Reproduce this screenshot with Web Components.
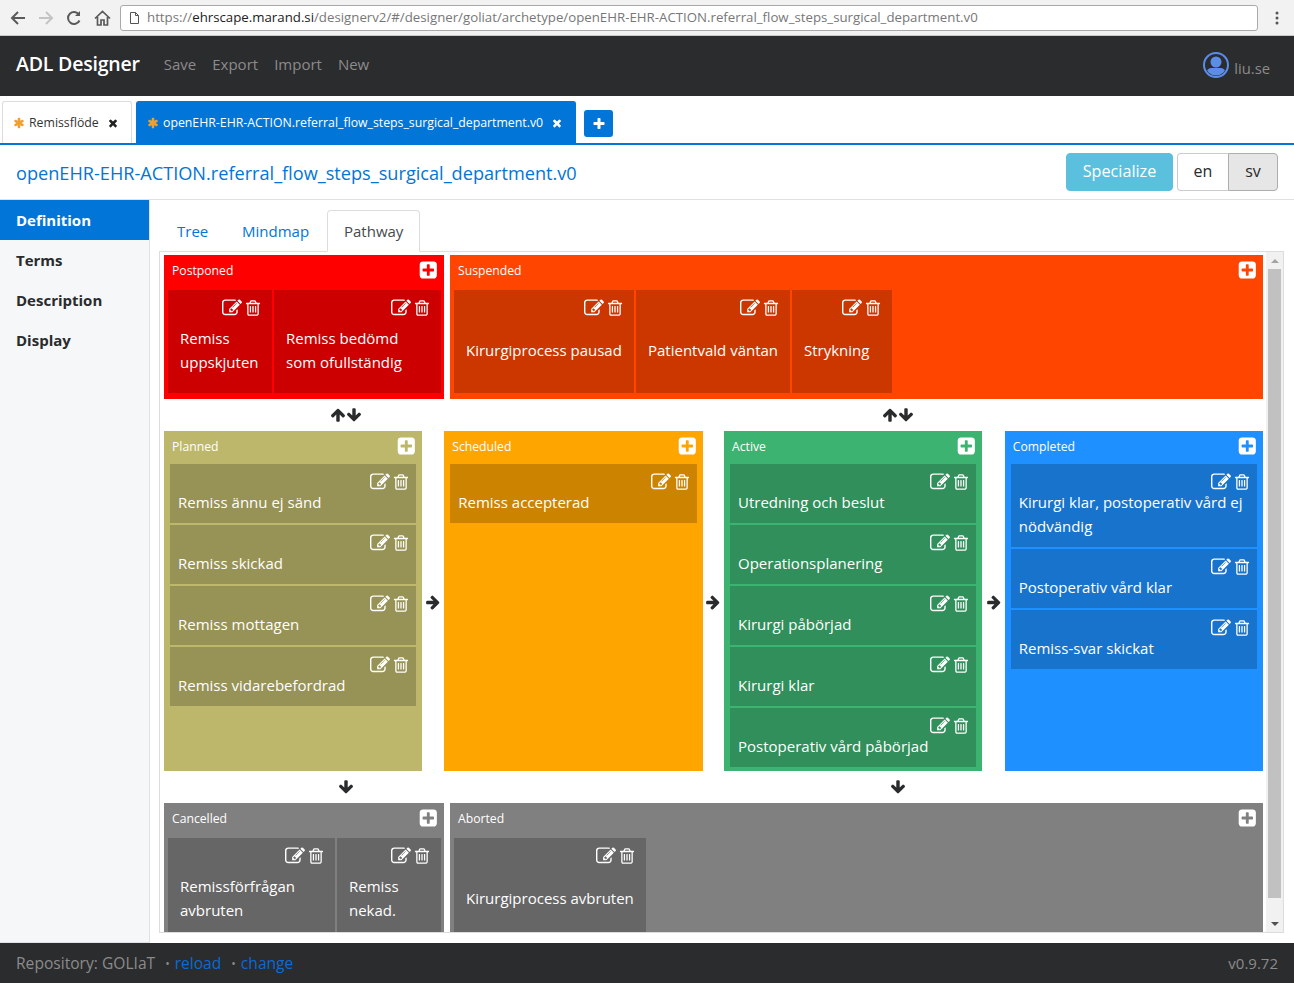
<!DOCTYPE html>
<html lang="en">
<head>
<meta charset="utf-8">
<title>ADL Designer</title>
<style>
  html, body { margin: 0; height: 100%; overflow: hidden; }
  body { font-family: "Open Sans", "Noto Sans", sans-serif; display: flex; flex-direction: column; height: 983px; background: #fff; }
  main-area { flex: 1; min-height: 0; }
</style>
</head>
<body>
<browser-bar url-host="ehrscape.marand.si" url-path="/designerv2/#/designer/goliat/archetype/openEHR-EHR-ACTION.referral_flow_steps_surgical_department.v0"></browser-bar>
<app-navbar></app-navbar>
<doc-tabs></doc-tabs>
<archetype-header>openEHR-EHR-ACTION.referral_flow_steps_surgical_department.v0</archetype-header>
<main-area>
  <side-menu></side-menu>
  <view-panel></view-panel>
</main-area>
<app-footer></app-footer>

<script>
const ICONS = {
  trash: 'M704 736v576q0 14-9 23t-23 9h-64q-14 0-23-9t-9-23v-576q0-14 9-23t23-9h64q14 0 23 9t9 23zm256 0v576q0 14-9 23t-23 9h-64q-14 0-23-9t-9-23v-576q0-14 9-23t23-9h64q14 0 23 9t9 23zm256 0v576q0 14-9 23t-23 9h-64q-14 0-23-9t-9-23v-576q0-14 9-23t23-9h64q14 0 23 9t9 23zm128 724v-948h-896v948q0 22 7 40.5t14.5 27 10.5 8.5h832q3 0 10.5-8.5t14.5-27 7-40.5zm-672-1076h448l-48-117q-7-9-17-11h-317q-10 2-17 11zm928 32v64q0 14-9 23t-23 9h-96v948q0 83-47 143.5t-113 60.5h-832q-66 0-113-58.5t-47-141.5v-952h-96q-14 0-23-9t-9-23v-64q0-14 9-23t23-9h309l70-167q15-37 54-63t79-26h320q40 0 79 26t54 63l70 167h309q14 0 23 9t9 23z',
  edit: 'M888 1184l116-116-152-152-116 116v56h96v96h56zm440-720q-16-16-33 1l-350 350q-17 17-1 33t33-1l350-350q17-17 1-33zm80 594v190q0 119-84.5 203.5t-203.5 84.5h-832q-119 0-203.5-84.5t-84.5-203.5v-832q0-119 84.5-203.5t203.5-84.5h832q63 0 117 25 15 7 18 23 3 17-9 29l-49 49q-14 14-32 8-23-6-45-6h-832q-66 0-113 47t-47 113v832q0 66 47 113t113 47h832q66 0 113-47t47-113v-126q0-13 9-22l64-64q15-15 35-7t20 29zm-96-738l288 288-672 672h-288v-288zm444 132l-92 92-288-288 92-92q28-28 68-28t68 28l152 152q28 28 28 68t-28 68z',
  plusSquare: 'M1344 960v-128q0-26-19-45t-45-19h-320v-320q0-26-19-45t-45-19h-128q-26 0-45 19t-19 45v320h-320q-26 0-45 19t-19 45v128q0 26 19 45t45 19h320v320q0 26 19 45t45 19h128q26 0 45-19t19-45v-320h320q26 0 45-19t19-45zm256-544v960q0 119-84.5 203.5t-203.5 84.5h-960q-119 0-203.5-84.5t-84.5-203.5v-960q0-119 84.5-203.5t203.5-84.5h960q119 0 203.5 84.5t84.5 203.5z',
  up: 'M1675 971q0 51-37 90l-75 75q-38 38-91 38-54 0-90-38l-294-293v704q0 52-37.5 84.5t-90.5 32.5h-128q-53 0-90.5-32.5t-37.5-84.5v-704l-294 293q-36 38-90 38t-90-38l-75-75q-38-38-38-90 0-53 38-91l651-651q35-37 90-37 54 0 91 37l651 651q37 39 37 91z',
  down: 'M1675 832q0 53-37 90l-651 652q-39 37-91 37-53 0-90-37l-651-652q-38-36-38-90 0-53 38-91l74-75q39-37 91-37 53 0 90 37l294 294v-704q0-52 38-90t90-38h128q52 0 90 38t38 90v704l294-294q37-37 90-37 52 0 91 37l75 75q37 39 37 91z',
  right: 'M1600 960q0 54-37 91l-651 651q-39 37-91 37-51 0-90-37l-75-75q-38-38-38-91t38-91l293-293h-704q-52 0-84.5-37.5t-32.5-90.5v-128q0-53 32.5-90.5t84.5-37.5h704l-293-294q-38-36-38-90t38-90l75-75q38-38 90-38 53 0 91 38l651 651q37 35 37 90z',
  times: 'M1490 1322q0 40-28 68l-136 136q-28 28-68 28t-68-28l-294-294-294 294q-28 28-68 28t-68-28l-136-136q-28-28-28-68t28-68l294-294-294-294q-28-28-28-68t28-68l136-136q28-28 68-28t68 28l294 294 294-294q28-28 68-28t68 28l136 136q28 28 28 68t-28 68l-294 294 294 294q28 28 28 68z',
  asterisk: 'M1546 1050q46 26 59.5 77.5t-12.5 97.5l-64 110q-26 46-77.5 59.5t-97.5-12.5l-266-153v307q0 52-38 90t-90 38h-128q-52 0-90-38t-38-90v-307l-266 153q-46 26-97.5 12.5t-77.5-59.5l-64-110q-26-46-12.5-97.5t59.5-77.5l266-154-266-154q-46-26-59.5-77.5t12.5-97.5l64-110q26-46 77.5-59.5t97.5 12.5l266 153v-307q0-52 38-90t90-38h128q52 0 90 38t38 90v307l266-153q46-26 97.5-12.5t77.5 59.5l64 110q26 46 12.5 97.5t-59.5 77.5l-266 154z',
  plus: 'M1600 736v192q0 40-28 68t-68 28h-416v416q0 40-28 68t-68 28h-192q-40 0-68-28t-28-68v-416h-416q-40 0-68-28t-28-68v-192q0-40 28-68t68-28h416v-416q0-40 28-68t68-28h192q40 0 68 28t28 68v416h416q40 0 68 28t28 68z'
};

class FaIcon extends HTMLElement {
  connectedCallback() {
    if (this.shadowRoot) return;
    const size = this.getAttribute('size') || 16;
    this.attachShadow({ mode: 'open' });
    this.shadowRoot.innerHTML = `
      <style>
        :host { display: inline-block; width: ${size}px; height: ${size}px; line-height: 0; flex: none; }
        svg { width: 100%; height: 100%; fill: currentColor; overflow: visible; }
      </style>
      <svg viewBox="0 0 1792 1792"><path d="${ICONS[this.getAttribute('name')]}"/></svg>
    `;
  }
}

class BrowserBar extends HTMLElement {
  connectedCallback() {
    this.attachShadow({ mode: 'open' });
    this.shadowRoot.innerHTML = `
      <style>
        :host { display: flex; align-items: center; height: 35px; background: #f2f2f2; border-bottom: 1px solid #c9c9c9; padding: 0 0 0 10px; font-family: "Open Sans", sans-serif; }
        svg { display: block; flex: none; fill: none; stroke: #5a5a5a; stroke-width: 2; }
        .nav { display: flex; align-items: center; gap: 12px; width: 110px; }
        .url { width: 1138px; height: 26px; box-sizing: border-box; background: #fff; border: 1px solid #a9a9a9; border-radius: 3px; display: flex; align-items: center; padding: 0 0 2px 9px; gap: 8px; font-size: 13.25px; color: #777; white-space: nowrap; overflow: hidden; }
        .url b { font-weight: 400; color: #222; }
        .url svg { stroke: #555; stroke-width: 1; margin-top: 2px; }
        .more { margin-left: 17px; }
        .more svg { fill: #555; stroke: none; }
      </style>
      <div class="nav">
        <svg width="16" height="16" viewBox="0 0 16 16"><path d="M15 8H2M8 2 2 8l6 6"/></svg>
        <svg width="16" height="16" viewBox="0 0 16 16" style="stroke:#c4c4c4"><path d="M1 8h13M8 2l6 6-6 6"/></svg>
        <svg width="16" height="16" viewBox="0 0 16 16"><path d="M13.5 10.5A6 6 0 1 1 13 4.6"/><path d="M14 1v5H9" style="fill:#5a5a5a;stroke:none"/></svg>
        <svg width="17" height="16" viewBox="0 0 17 16"><path d="M1 8.5 8.500 1.500 16 8.500M3.500 7v8h3.500v-5h3v5h3.500V7" stroke-width="1.700"/></svg>
      </div>
      <div class="url">
        <svg width="9" height="12" viewBox="0 0 9 12"><path d="M.5.500h5l3 3v8h-8zM5.500.5v3h3"/></svg>
        <span>https://<b>${this.getAttribute('url-host')}</b>${this.getAttribute('url-path')}</span>
      </div>
      <div class="more"><svg width="4" height="14" viewBox="0 0 4 14"><circle cx="2" cy="2" r="1.500"/><circle cx="2" cy="7" r="1.500"/><circle cx="2" cy="12" r="1.500"/></svg></div>
    `;
  }
}

class AppNavbar extends HTMLElement {
  connectedCallback() {
    this.attachShadow({ mode: 'open' });
    this.shadowRoot.innerHTML = `
      <style>
        :host { display: flex; align-items: center; box-sizing: border-box; height: 60px; background: #2b2c2e; padding: 0 24px 2px 16px; color: #8b8b8b; font-size: 15px; }
        .brand { color: #fff; font-size: 19.5px; font-weight: 600; margin: 0 24px 4px 0; letter-spacing: -.2px; }
        a { margin: 0 16px 2px 0; }
        .user { margin-left: auto; display: flex; align-items: center; gap: 5px; }
        .user span { margin-top: 6px; font-size: 14.800px; }
        svg { display: block; }
      </style>
      <span class="brand">ADL Designer</span>
      <a>Save</a><a>Export</a><a>Import</a><a>New</a>
      <div class="user">
        <svg width="26" height="26" viewBox="0 0 26 26">
          <defs><clipPath id="c"><circle cx="13" cy="13" r="10.500"/></clipPath></defs>
          <circle cx="13" cy="13" r="12" fill="none" stroke="#5b8de8" stroke-width="2"/>
          <g fill="#5b8de8" clip-path="url(#c)"><circle cx="13" cy="10" r="5.500"/><path d="M2 26c0-8 4-10 7-10h8c3 0 7 2 7 10z"/></g>
        </svg>
        <span>liu.se</span>
      </div>
    `;
  }
}

class DocTabs extends HTMLElement {
  connectedCallback() {
    this.attachShadow({ mode: 'open' });
    this.shadowRoot.innerHTML = `
      <style>
        :host { display: flex; align-items: flex-end; height: 47px; border-bottom: 2px solid #0275d8; padding-left: 2px; font-size: 12.3px; color: #333; }
        .tab { display: flex; align-items: center; box-sizing: border-box; height: 42px; border: 1px solid #ddd; border-bottom: 0; border-radius: 3px 3px 0 0; padding-left: 10px; margin-right: 4px; white-space: nowrap; }
        .one { width: 130px; }
        .two { width: 440px; background: #0275d8; border-color: #0275d8; color: #fff; }
        fa-icon.star { color: #f0a030; margin-right: 4px; }
        fa-icon.x { margin-left: 8px; color: #222; }
        .two fa-icon.x { color: #fff; }
        .add { width: 29px; height: 27px; margin: 0 0 6px 4px; background: #0275d8; border-radius: 3px; color: #fff; display: flex; align-items: center; justify-content: center; }
      </style>
      <div class="tab one"><fa-icon class="star" name="asterisk" size="12"></fa-icon>Remissflöde<fa-icon class="x" name="times" size="12"></fa-icon></div>
      <div class="tab two"><fa-icon class="star" name="asterisk" size="12"></fa-icon><span>openEHR-EHR-ACTION.referral_flow_steps_surgical_department.v0</span><fa-icon class="x" name="times" size="12"></fa-icon></div>
      <div class="add"><fa-icon name="plus" size="14"></fa-icon></div>
    `;
  }
}

class ArchetypeHeader extends HTMLElement {
  connectedCallback() {
    this.attachShadow({ mode: 'open' });
    this.shadowRoot.innerHTML = `
      <style>
        :host { display: flex; align-items: center; justify-content: space-between; height: 54px; border-bottom: 1px solid #dfe1e6; padding: 0 16px; }
        h1 { margin: 2px 0 0; font-size: 18.150px; font-weight: 400; color: #0275d8; }
        .btns { display: flex; align-items: center; font-size: 16px; color: #292b2c; }
        button { font: inherit; color: inherit; box-sizing: border-box; height: 38px; border: 1px solid #ccc; background: #fff; padding: 0 0 3px; }
        .spec { width: 107px; background: #5bc0de; border-color: #5bc0de; color: #fff; border-radius: 4px; margin-right: 4px; font-size: 16.200px; }
        .en { width: 51px; border-radius: 4px 0 0 4px; border-right: 0; }
        .sv { width: 50px; border-radius: 0 4px 4px 0; background: #e6e6e6; border-color: #adadad; }
      </style>
      <h1><slot></slot></h1>
      <div class="btns"><button class="spec">Specialize</button><button class="en">en</button><button class="sv">sv</button></div>
    `;
  }
}

class MainArea extends HTMLElement {
  connectedCallback() {
    this.attachShadow({ mode: 'open' });
    this.shadowRoot.innerHTML = `
      <style>:host { display: flex; }</style>
      <slot></slot>
    `;
  }
}

class SideMenu extends HTMLElement {
  connectedCallback() {
    this.attachShadow({ mode: 'open' });
    const items = ['Definition', 'Terms', 'Description', 'Display'];
    this.shadowRoot.innerHTML = `
      <style>
        :host { display: block; flex: none; box-sizing: border-box; width: 150px; background: #f6f7f9; border-right: 1px solid #dfe1e6; border-bottom: 1px solid #dfe1e6; }
        a { display: flex; align-items: center; height: 40px; padding-left: 16px; font-size: 15px; font-weight: 700; color: #292b2c; }
        a.on { background: #0275d8; color: #fff; }
      </style>
      ${items.map((t, i) => `<a class="${i ? '' : 'on'}">${t}</a>`).join('')}
    `;
  }
}

class ViewPanel extends HTMLElement {
  connectedCallback() {
    this.attachShadow({ mode: 'open' });
    this.shadowRoot.innerHTML = `
      <style>
        :host { display: flex; flex-direction: column; flex: 1; min-width: 0; box-sizing: border-box; padding: 10px 10px 10px 9px; }
        .tabs { display: flex; height: 42px; flex: none; font-size: 15px; color: #0275d8; position: relative; z-index: 1; }
        .tabs a { display: flex; align-items: center; box-sizing: border-box; height: 42px; border: 1px solid transparent; padding-left: 17px; }
        .tabs a:nth-child(1) { width: 65px; }
        .tabs a:nth-child(2) { width: 101px; }
        .tabs a.on { width: 93px; margin-left: 2px; padding-left: 16px; border-color: #ddd; border-bottom-color: #fff; border-radius: 4px 4px 0 0; background: #fff; color: #464a4c; }
        path-board { flex: 1; min-height: 0; margin-top: -1px; }
      </style>
      <div class="tabs"><a>Tree</a><a>Mindmap</a><a class="on">Pathway</a></div>
      <path-board></path-board>
    `;
  }
}

class StateCell extends HTMLElement {
  connectedCallback() {
    this.attachShadow({ mode: 'open' });
    this.shadowRoot.innerHTML = `
      <style>
        :host { display: block; box-sizing: border-box; background: rgba(0,0,0,.2); color: #fff; font-size: 15px; line-height: 24px; padding: 8px 8px 9px; }
        :host([wide]) { padding: 8px 12px 19px; flex: none; }
        .tools { display: flex; justify-content: flex-end; align-items: center; gap: 2px; height: 19px; margin-right: -2px; }
        .text { display: block; margin-top: -1px; }
        :host([wide]) .text { display: flex; align-items: center; min-height: 48px; margin-top: 9px; }
      </style>
      <div class="tools"><fa-icon name="edit" size="20"></fa-icon><fa-icon name="trash" size="18"></fa-icon></div>
      <div class="text"><span><slot></slot></span></div>
    `;
  }
}

class StateGroup extends HTMLElement {
  connectedCallback() {
    this.attachShadow({ mode: 'open' });
    this.shadowRoot.innerHTML = `
      <style>
        :host { display: flex; flex-direction: column; box-sizing: border-box; background: var(--bg); color: #fff; padding-bottom: 4px; }
        :host([wide]) { padding-bottom: 6px; }
        header { display: flex; align-items: center; justify-content: space-between; height: 30px; margin-bottom: 3px; padding: 0 5px 0 8px; font-size: 12.200px; flex: none; }
        :host([wide]) header { margin-bottom: 5px; }
        .cells { display: flex; flex-direction: column; gap: 2px; padding: 0 6px; }
        :host([wide]) .cells { flex-direction: row; padding: 0 3px 0 4px; }
      </style>
      <header><span>${this.getAttribute('label')}</span><fa-icon name="plusSquare" size="20"></fa-icon></header>
      <div class="cells"><slot></slot></div>
    `;
  }
}

class PathBoard extends HTMLElement {
  connectedCallback() {
    this.attachShadow({ mode: 'open' });
    this.shadowRoot.innerHTML = `
      <style>
        :host { display: flex; box-sizing: border-box; border: 1px solid #ddd; font-family: "Open Sans", sans-serif; }
        .scroll { flex: 1; min-width: 0; overflow: hidden; padding: 3px 3px 0 4px; }
        .row { display: flex; }
        .split { gap: 6px; }
        .split state-group:first-child { width: 280px; flex: none; }
        .split state-group:last-child { flex: 1; }
        .arrows { height: 32px; display: flex; align-items: center; color: #292b2c; }
        .arrows div { display: flex; justify-content: center; gap: 0; flex: none; }
        .arrows .a { width: 364px; }
        .arrows .b { width: 740px; }
        .cols state-group { flex: 1 1 0; min-width: 0; }
        .link { flex: none; width: 22px; padding-top: 2px; display: flex; align-items: center; justify-content: center; color: #292b2c; }
        .link.n { width: 21.500px; }
        .link.w { width: 22.500px; }
      </style>
      <div class="scroll">
        <div class="row split">
          <state-group wide label="Postponed" style="--bg:#ff0000">
            <state-cell wide style="width:104px">Remiss uppskjuten</state-cell>
            <state-cell wide style="width:167px">Remiss bedömd som ofullständig</state-cell>
          </state-group>
          <state-group wide label="Suspended" style="--bg:#ff4500">
            <state-cell wide style="width:180px">Kirurgiprocess pausad</state-cell>
            <state-cell wide style="width:154px;white-space:nowrap">Patientvald väntan</state-cell>
            <state-cell wide style="width:100px">Strykning</state-cell>
          </state-group>
        </div>
        <div class="arrows">
          <div class="a"><fa-icon name="up" size="16"></fa-icon><fa-icon name="down" size="16"></fa-icon></div>
          <div class="b"><fa-icon name="up" size="16"></fa-icon><fa-icon name="down" size="16"></fa-icon></div>
        </div>
        <div class="row cols">
          <state-group label="Planned" style="--bg:#bdb76b">
            <state-cell>Remiss ännu ej sänd</state-cell>
            <state-cell>Remiss skickad</state-cell>
            <state-cell>Remiss mottagen</state-cell>
            <state-cell>Remiss vidarebefordrad</state-cell>
          </state-group>
          <div class="link"><fa-icon name="right" size="16"></fa-icon></div>
          <state-group label="Scheduled" style="--bg:#ffa500">
            <state-cell>Remiss accepterad</state-cell>
          </state-group>
          <div class="link n"><fa-icon name="right" size="16"></fa-icon></div>
          <state-group label="Active" style="--bg:#3cb371">
            <state-cell>Utredning och beslut</state-cell>
            <state-cell>Operationsplanering</state-cell>
            <state-cell>Kirurgi påbörjad</state-cell>
            <state-cell>Kirurgi klar</state-cell>
            <state-cell>Postoperativ vård påbörjad</state-cell>
          </state-group>
          <div class="link w"><fa-icon name="right" size="16"></fa-icon></div>
          <state-group label="Completed" style="--bg:#1e90ff">
            <state-cell>Kirurgi klar, postoperativ vård ej nödvändig</state-cell>
            <state-cell>Postoperativ vård klar</state-cell>
            <state-cell>Remiss-svar skickat</state-cell>
          </state-group>
        </div>
        <div class="arrows">
          <div class="a"><fa-icon name="down" size="16"></fa-icon></div>
          <div class="b"><fa-icon name="down" size="16"></fa-icon></div>
        </div>
        <div class="row split">
          <state-group wide label="Cancelled" style="--bg:#808080">
            <state-cell wide style="width:167px">Remissförfrågan avbruten</state-cell>
            <state-cell wide style="width:104px">Remiss nekad.</state-cell>
          </state-group>
          <state-group wide label="Aborted" style="--bg:#808080">
            <state-cell wide style="width:192px">Kirurgiprocess avbruten</state-cell>
          </state-group>
        </div>
      </div>
      <fake-scrollbar></fake-scrollbar>
    `;
  }
}

class FakeScrollbar extends HTMLElement {
  connectedCallback() {
    this.attachShadow({ mode: 'open' });
    this.shadowRoot.innerHTML = `
      <style>
        :host { display: flex; flex-direction: column; align-items: center; flex: none; width: 17px; background: #f1f1f1; }
        .end { height: 17px; flex: none; display: flex; align-items: center; justify-content: center; }
        .up { border: 4px solid transparent; border-top: 0; border-bottom: 4px solid #a3a3a3; }
        .dn { border: 4px solid transparent; border-bottom: 0; border-top: 4px solid #505050; }
        .track { flex: 1; width: 100%; display: flex; justify-content: center; padding-bottom: 17px; }
        .thumb { width: 13px; background: #c1c1c1; }
      </style>
      <div class="end"><i class="up"></i></div>
      <div class="track"><div class="thumb"></div></div>
      <div class="end"><i class="dn"></i></div>
    `;
  }
}

class AppFooter extends HTMLElement {
  connectedCallback() {
    this.attachShadow({ mode: 'open' });
    this.shadowRoot.innerHTML = `
      <style>
        :host { display: flex; align-items: center; flex: none; height: 40px; background: #2b2c2e; padding: 0 16px; color: #8b8b8b; font-size: 15.600px; }
        a { color: #0a6ad6; }
        .dot { margin: 0 5px 0 10px; font-size: 12px; }
        .ver { margin-left: auto; font-size: 15px; }
      </style>
      <span>Repository: GOLIaT</span>
      <span class="dot">•</span><a>reload</a>
      <span class="dot">•</span><a>change</a>
      <span class="ver">v0.9.72</span>
    `;
  }
}

customElements.define('fa-icon', FaIcon);
customElements.define('browser-bar', BrowserBar);
customElements.define('app-navbar', AppNavbar);
customElements.define('doc-tabs', DocTabs);
customElements.define('archetype-header', ArchetypeHeader);
customElements.define('main-area', MainArea);
customElements.define('side-menu', SideMenu);
customElements.define('view-panel', ViewPanel);
customElements.define('state-cell', StateCell);
customElements.define('state-group', StateGroup);
customElements.define('fake-scrollbar', FakeScrollbar);
customElements.define('path-board', PathBoard);
customElements.define('app-footer', AppFooter);
</script>
</body>
</html>
